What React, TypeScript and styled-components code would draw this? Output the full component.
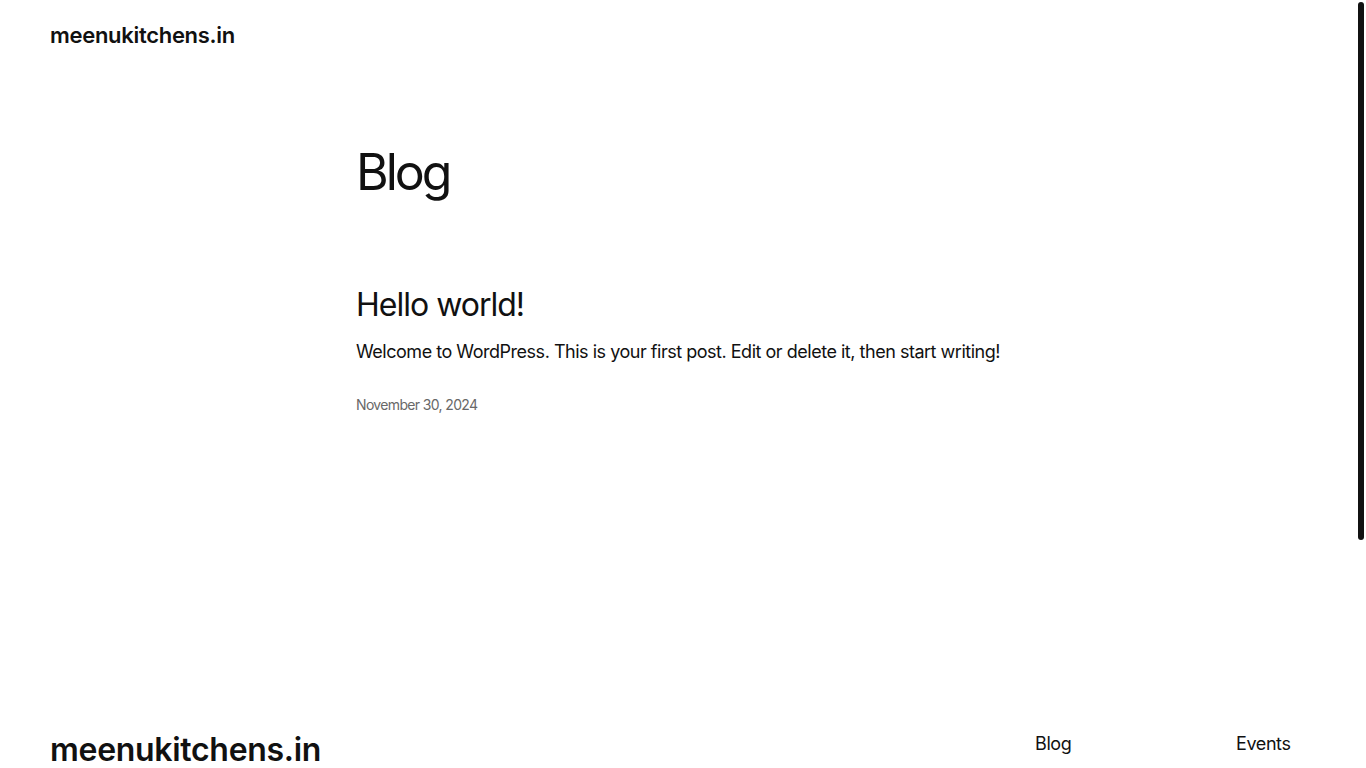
import * as React from 'react';
import styled, { createGlobalStyle } from 'styled-components';

const GlobalStyle = createGlobalStyle`
    html, body {
        margin: 0;
        padding: 0;
        background: #ffffff;
    }
    body {
        font-family: Inter, "Noto Sans", "Liberation Sans", sans-serif;
        color: #111111;
        -webkit-font-smoothing: antialiased;
    }
    a {
        color: inherit;
        text-decoration: none;
    }
`;

const footerColumns = [
    ['Blog'],
    ['Events'],
];

export default class App extends React.Component<any, {}> {
    render() {
        return (
            <Page>
                <GlobalStyle />
                <Header>
                    <SiteTitle href="#">meenukitchens.in</SiteTitle>
                </Header>

                <Main>
                    <PageTitle>Blog</PageTitle>

                    <Post>
                        <PostTitle>
                            <a href="#">Hello world!</a>
                        </PostTitle>
                        <Excerpt>
                            Welcome to WordPress. This is your first post. Edit or delete it, then start writing!
                        </Excerpt>
                        <PostDate>November 30, 2024</PostDate>
                    </Post>
                </Main>

                <Footer>
                    <FooterTitle href="#">meenukitchens.in</FooterTitle>
                    <FooterNav>
                        {footerColumns.map((column, i) => (
                            <NavColumn key={i}>
                                {column.map((item) => (
                                    <NavLink key={item} href="#">{item}</NavLink>
                                ))}
                            </NavColumn>
                        ))}
                    </FooterNav>
                </Footer>

                {/* overlay scrollbar thumb, the page is taller than the window */}
                <ScrollThumb />
            </Page>
        );
    }
}

const Page = styled.div`
    min-height: 100vh;
    display: flex;
    flex-direction: column;
`;

const ScrollThumb = styled.div`
    position: fixed;
    top: 2px;
    right: 2px;
    width: 6px;
    height: 538px;
    border-radius: 3px;
    background: #111111;
`;

const Header = styled.header`
    display: flex;
    align-items: center;
    height: 70px;
    padding: 0 50px;
`;

const SiteTitle = styled.a`
    font-size: 22px;
    font-weight: 600;
    letter-spacing: -0.3px;
`;

const Main = styled.main`
    width: 654px;
    min-height: 661px;
    margin: 0 auto;
    padding: 72px 0 0;
    box-sizing: border-box;
`;

const PageTitle = styled.h1`
    margin: 0;
    font-size: 50px;
    font-weight: 400;
    line-height: 1.2;
    letter-spacing: -3px;
`;

const Post = styled.article`
    margin-top: 84px;
`;

const PostTitle = styled.h2`
    margin: 0;
    font-size: 32px;
    font-weight: 400;
    line-height: 1.2;
    letter-spacing: -1px;
`;

const Excerpt = styled.p`
    margin: 15px 0 0;
    font-size: 18px;
    line-height: 1.4;
    letter-spacing: -0.48px;
`;

const PostDate = styled.div`
    margin-top: 31px;
    font-size: 14px;
    color: #686868;
    letter-spacing: -0.65px;
`;

const Footer = styled.footer`
    display: flex;
    justify-content: space-between;
    align-items: flex-start;
    padding: 0 50px 120px;
`;

const FooterTitle = styled.a`
    font-size: 32px;
    font-weight: 600;
    letter-spacing: -0.3px;
    line-height: 1.2;
`;

const FooterNav = styled.nav`
    display: flex;
    gap: 121px;
    margin-top: 2px;
`;

const NavColumn = styled.div`
    display: flex;
    flex-direction: column;
    gap: 20px;
    width: 80px;
`;

const NavLink = styled.a`
    font-size: 18px;
    letter-spacing: -0.4px;
`;
